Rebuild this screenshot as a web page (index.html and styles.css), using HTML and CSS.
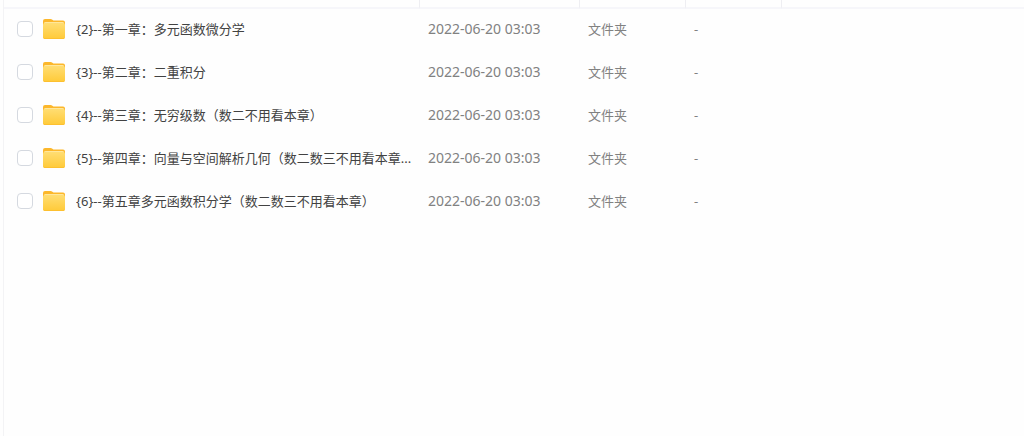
FILE: index.html
```html
<!DOCTYPE html>
<html lang="zh-CN">
<head>
  <meta charset="UTF-8" />
  <meta name="viewport" content="width=device-width, initial-scale=1.0"/>
  <title>文件列表</title>
  <link rel="stylesheet" href="styles.css">
</head>
<body>
  <svg class="defs" width="0" height="0" aria-hidden="true">
    <defs>
      <linearGradient id="front" x1="0" y1="0" x2="0" y2="1">
        <stop offset="0" stop-color="#ffdd72"/>
        <stop offset="1" stop-color="#ffca38"/>
      </linearGradient>
      <symbol id="folder" viewBox="0 0 22 20">
        <path d="M0 2Q0 0 2 0H7.5Q8.6 0 9.4 .8L10.4 1.6H20Q22 1.6 22 3.6V12H0Z" fill="#fcb72b"/>
        <path d="M1 4.4Q1 3 2.5 3H19.5Q21 3 21 4.4V9H1Z" fill="#ffe79c"/>
        <path d="M0 6Q0 4 2 4H20Q22 4 22 6V18Q22 20 20 20H2Q0 20 0 18Z" fill="url(#front)"/>
        <path d="M.2 18.4Q.6 19.6 2 19.6H20Q21.4 19.6 21.8 18.4" fill="none" stroke="#fbbd2c" stroke-width=".8"/>
      </symbol>
    </defs>
  </svg>

  <div class="file-list">
    <table>
      <thead>
        <tr>
          <th class="col-name"></th>
          <th class="col-date"></th>
          <th class="col-type"></th>
          <th class="col-size"></th>
          <th class="col-rest"></th>
        </tr>
      </thead>
      <tbody>
        <tr>
          <td>
            <div class="file">
              <input type="checkbox" id="f2">
              <svg class="icon"><use href="#folder"/></svg>
              <label for="f2">{2}--第一章：多元函数微分学</label>
            </div>
          </td>
          <td class="date">2022-06-20 03:03</td>
          <td>文件夹</td>
          <td>-</td>
          <td></td>
        </tr>
        <tr>
          <td>
            <div class="file">
              <input type="checkbox" id="f3">
              <svg class="icon"><use href="#folder"/></svg>
              <label for="f3">{3}--第二章：二重积分</label>
            </div>
          </td>
          <td class="date">2022-06-20 03:03</td>
          <td>文件夹</td>
          <td>-</td>
          <td></td>
        </tr>
        <tr>
          <td>
            <div class="file">
              <input type="checkbox" id="f4">
              <svg class="icon"><use href="#folder"/></svg>
              <label for="f4">{4}--第三章：无穷级数（数二不用看本章）</label>
            </div>
          </td>
          <td class="date">2022-06-20 03:03</td>
          <td>文件夹</td>
          <td>-</td>
          <td></td>
        </tr>
        <tr>
          <td>
            <div class="file">
              <input type="checkbox" id="f5">
              <svg class="icon"><use href="#folder"/></svg>
              <label for="f5">{5}--第四章：向量与空间解析几何（数二数三不用看本章...</label>
            </div>
          </td>
          <td class="date">2022-06-20 03:03</td>
          <td>文件夹</td>
          <td>-</td>
          <td></td>
        </tr>
        <tr>
          <td>
            <div class="file">
              <input type="checkbox" id="f6">
              <svg class="icon"><use href="#folder"/></svg>
              <label for="f6">{6}--第五章多元函数积分学（数二数三不用看本章）</label>
            </div>
          </td>
          <td class="date">2022-06-20 03:03</td>
          <td>文件夹</td>
          <td>-</td>
          <td></td>
        </tr>
      </tbody>
    </table>
  </div>
</body>
</html>
```
FILE: styles.css
```css
* {
  box-sizing: border-box;
}
body {
  font-family: "Noto Sans", "Noto Sans CJK SC", sans-serif;
  font-size: 13px;
  line-height: 20px;
  background: #fefefe;
  color: #818181;
  margin: 0;
}
.defs {
  position: absolute;
}
.file-list {
  min-height: 100vh;
  margin-left: 3px;
  border-left: 1px solid #f3f3f5;
}
table {
  width: 100%;
  table-layout: fixed;
  border-collapse: separate;
  border-spacing: 0;
}
th {
  height: 9px;
  padding: 0;
  border-right: 1px solid #eeeef2;
  border-bottom: 2px solid #f6f6fa;
}
.col-name {
  width: 416px;
}
.col-date {
  width: 160px;
}
.col-type {
  width: 106px;
}
.col-size {
  width: 96px;
}
.col-rest {
  border-right: none;
}
td {
  height: 43px;
  padding: 0 8px 3px;
  white-space: nowrap;
}
td:first-child {
  padding-left: 13px;
}
.date {
  font-size: 14px;
}
.file {
  display: flex;
  align-items: center;
}
.file input {
  appearance: none;
  flex: none;
  width: 16px;
  height: 16px;
  margin: 0;
  border: 1px solid #d5d9e0;
  border-radius: 4px;
  background: #fff;
}
.file input:checked {
  background: #06a7ff;
}
.icon {
  flex: none;
  width: 22px;
  height: 20px;
  margin: 0 11px 0 10px;
}
.file label {
  overflow: hidden;
  text-overflow: ellipsis;
  color: #424242;
}
```
